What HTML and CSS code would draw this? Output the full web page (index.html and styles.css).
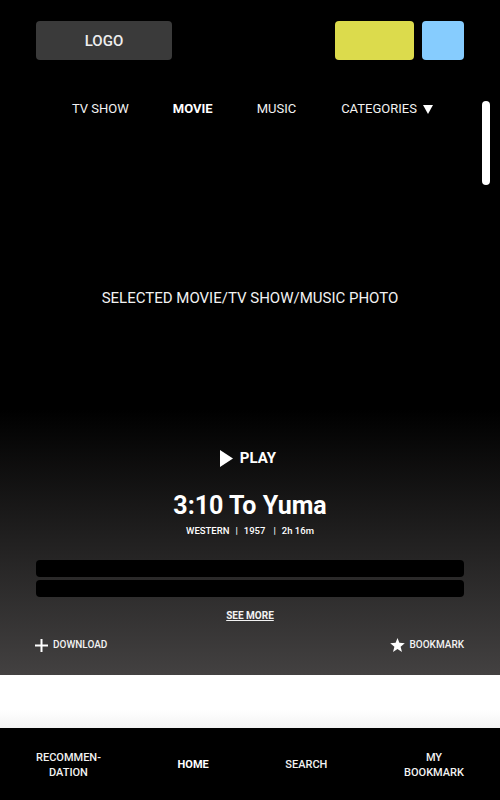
FILE: index.html
```html
<!DOCTYPE html>
<html>
<head>
<meta charset="utf-8">
<link rel="stylesheet" href="styles.css">
</head>
<body>
<div class="page">
  <section class="hero">
    <header class="top">
      <div class="logo">LOGO</div>
      <div class="top-actions">
        <div class="btn-yellow"></div>
        <div class="btn-blue"></div>
      </div>
    </header>
    <nav class="tabs">
      <span class="tab">TV SHOW</span>
      <span class="tab active">MOVIE</span>
      <span class="tab">MUSIC</span>
      <span class="tab">CATEGORIES <svg class="caret" width="10" height="10" viewBox="0 0 10 10"><polygon points="0,1 10,1 5,10" fill="#fff"/></svg></span>
    </nav>
    <div class="scrollbar"></div>
    <div class="photo">SELECTED MOVIE/TV SHOW/MUSIC PHOTO</div>
    <div class="play">
      <svg width="13" height="17" viewBox="0 0 13 17"><polygon points="0,0 13,8.5 0,17" fill="#fff"/></svg>
      <span>PLAY</span>
    </div>
    <h1 class="title">3:10 To Yuma</h1>
    <div class="meta"><span>WESTERN</span><span class="sep">|</span><span>1957</span><span class="sep wide">|</span><span>2h 16m</span></div>
    <div class="bars">
      <div class="bar"></div>
      <div class="bar"></div>
    </div>
    <div class="see-more">SEE MORE</div>
    <div class="actions">
      <div class="action">
        <svg width="13" height="13" viewBox="0 0 13 13"><path d="M6.5 0V13M0 6.5H13" stroke="#fff" stroke-width="2"/></svg>
        <span>DOWNLOAD</span>
      </div>
      <div class="action">
        <svg width="15" height="14" viewBox="0 0 24 23"><polygon points="12,0 15.1,8 24,8.6 17.1,14.2 19.4,23 12,18.1 4.6,23 6.9,14.2 0,8.6 8.9,8" fill="#fff"/></svg>
        <span>BOOKMARK</span>
      </div>
    </div>
  </section>
  <div class="strip"></div>
  <footer class="bottom-nav">
    <span class="bn">RECOMMEN-<br>DATION</span>
    <span class="bn active">HOME</span>
    <span class="bn">SEARCH</span>
    <span class="bn">MY<br>BOOKMARK</span>
  </footer>
</div>
</body>
</html>
```
FILE: styles.css
```css
* { box-sizing: border-box; }
html, body { margin: 0; padding: 0; background: #000; }
body { font-family: Roboto, "Noto Sans", sans-serif; color: #fff; }
.page { width: 500px; height: 800px; display: flex; flex-direction: column; }

.hero {
  position: relative;
  height: 675px;
  padding: 21px 36px 0;
  background: linear-gradient(to bottom, #000 0, #000 410px, #434141 675px);
  display: flex;
  flex-direction: column;
  align-items: center;
}
.top { width: 100%; height: 39px; display: flex; justify-content: space-between; }
.logo {
  width: 136px; height: 39px; background: #3a3a3a; border-radius: 4px;
  display: flex; align-items: center; justify-content: center;
  font-size: 15px; font-weight: 500; color: #eee;
}
.top-actions { display: flex; gap: 8px; }
.btn-yellow { width: 79px; height: 39px; background: #dcdb4c; border-radius: 4px; }
.btn-blue { width: 42px; height: 39px; background: #86ccfe; border-radius: 4px; }

.tabs {
  align-self: stretch;
  margin-top: 41px;
  padding-left: 36px;
  display: flex; gap: 44px;
  font-size: 13px; line-height: 16px; color: #f2f2f2;
}
.tab { display: flex; align-items: center; }
.tab:last-child { margin-left: 1px; }
.tab.active { font-weight: 700; color: #fff; }
.caret { margin-left: 6px; }
.scrollbar {
  position: absolute; left: 482px; top: 101px;
  width: 8px; height: 84px; background: #fff; border-radius: 4px;
}

.photo { margin-top: 172px; font-size: 15px; line-height: 18px; color: #f2f2f2; }
.play {
  margin-top: 142px; margin-right: 4px; height: 18px;
  display: flex; align-items: center; gap: 7px;
  font-size: 15px; font-weight: 700;
}
.title { margin: 24px 0 0; font-size: 25px; line-height: 30px; font-weight: 700; }
.meta { margin-top: 4px; font-size: 9.5px; line-height: 12px; height: 12px; font-weight: 500; display: flex; }
.sep { margin: 0 6px; }
.sep.wide { margin: 0 6px 0 8px; }

.bars { align-self: stretch; margin-top: 23px; display: flex; flex-direction: column; gap: 3px; }
.bar { height: 17px; background: #000; border-radius: 4px; }

.see-more {
  margin-top: 13px; font-size: 10px; line-height: 12px; font-weight: 700;
  text-decoration: underline; color: #f2f2f2;
}
.actions {
  align-self: stretch; margin-top: 16px; margin-left: -1px;
  display: flex; justify-content: space-between;
  font-size: 10px; line-height: 14px; font-weight: 500; color: #f2f2f2;
}
.action { display: flex; align-items: center; gap: 5px; }

.strip { height: 53px; background: linear-gradient(to bottom, #fff 0, #fff 35px, #f4f4f4 53px); }

.bottom-nav {
  height: 72px; background: #000;
  padding: 1px 36px 0;
  display: flex; justify-content: space-between; align-items: center;
  font-size: 11px; line-height: 15px; font-weight: 500; text-align: center; color: #f2f2f2;
}
.bn.active { font-weight: 700; color: #fff; }
```
